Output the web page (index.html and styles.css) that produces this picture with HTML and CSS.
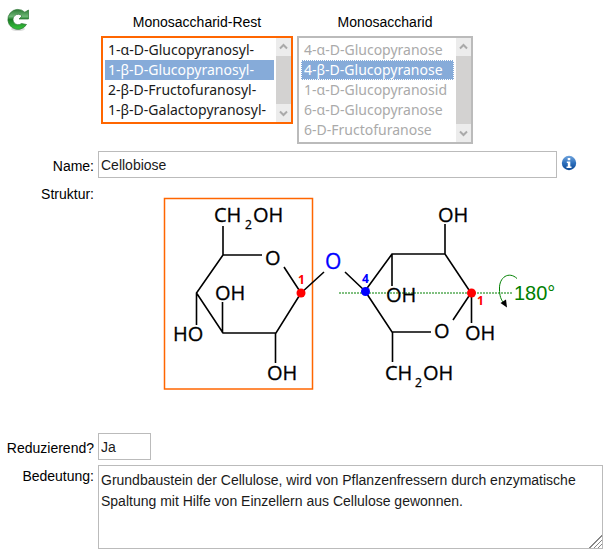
FILE: index.html
```html
<!DOCTYPE html>
<html lang="de">
<head>
<meta charset="utf-8">
<title>Disaccharide</title>
<link rel="stylesheet" href="styles.css">
</head>
<body>
<form class="sheet">
  <div class="side">
    <button class="reload" type="button" aria-label="Neu laden">
      <svg width="24" height="24" viewBox="0 0 24 24" aria-hidden="true">
        <defs>
          <linearGradient id="green" x1="0" y1="0" x2="0" y2="1">
            <stop offset="0" stop-color="#2c7a34"/>
            <stop offset=".35" stop-color="#6fb877"/>
            <stop offset=".5" stop-color="#1b7d25"/>
            <stop offset="1" stop-color="#35c63a"/>
          </linearGradient>
        </defs>
        <ellipse cx="12" cy="21" rx="7" ry="2" fill="#ddd"/>
        <path d="M22.500 2V11H13L16 8A5.200 5.200 0 1 0 15.500 15.500L20.500 16.500A10 10 0 1 1 18.800 4.200Z" fill="url(#green)" stroke="#2b7433" stroke-width=".7"/>
      </svg>
    </button>
  </div>
  <div class="pickers">
    <div class="picker">
      <label for="rest">Monosaccharid-Rest</label>
      <div class="listbox active">
        <select id="rest" size="4">
          <option>1-α-D-Glucopyranosyl-</option>
          <option selected>1-β-D-Glucopyranosyl-</option>
          <option>2-β-D-Fructofuranosyl-</option>
          <option>1-β-D-Galactopyranosyl-</option>
        </select>
        <div class="bar" aria-hidden="true">
          <svg class="arrow" viewBox="0 0 15 18"><path d="M4 10.500 7.500 7 11 10.500"/></svg>
          <svg class="arrow" viewBox="0 0 15 18"><path d="M4 7.500 7.500 11 11 7.500"/></svg>
        </div>
      </div>
    </div>
    <div class="picker">
      <label for="mono">Monosaccharid</label>
      <div class="listbox muted">
        <select id="mono" size="5">
          <option>4-α-D-Glucopyranose</option>
          <option selected>4-β-D-Glucopyranose</option>
          <option>1-α-D-Glucopyranosid</option>
          <option>6-α-D-Glucopyranose</option>
          <option>6-D-Fructofuranose</option>
        </select>
        <div class="bar" aria-hidden="true">
          <svg class="arrow" viewBox="0 0 15 18"><path d="M4 10.500 7.500 7 11 10.500"/></svg>
          <svg class="arrow" viewBox="0 0 15 18"><path d="M4 7.500 7.500 11 11 7.500"/></svg>
        </div>
      </div>
    </div>
  </div>

  <label class="caption" for="name">Name:</label>
  <div class="line">
    <input class="field name" id="name" type="text" value="Cellobiose">
    <button class="info" type="button" aria-label="Information">
      <svg width="16" height="16" viewBox="0 0 16 16" aria-hidden="true">
        <defs>
          <linearGradient id="blue" x1="0" y1="0" x2="0" y2="1">
            <stop offset="0" stop-color="#6fa3dc"/>
            <stop offset=".5" stop-color="#2f71bd"/>
            <stop offset="1" stop-color="#0b4794"/>
          </linearGradient>
        </defs>
        <circle cx="8" cy="8" r="7.200" fill="url(#blue)"/>
        <path d="M6.700 3h2.600v2.200H6.700zM5.800 6.500h3.500v5h1.200V13H5.500v-1.500h1.300V8h-1z" fill="#fff"/>
      </svg>
    </button>
  </div>

  <span class="caption top">Struktur:</span>
  <svg class="structure" width="480" height="250" viewBox="98 183 480 250" role="img" aria-label="Strukturformel der Cellobiose">
    <rect class="frame" x="164.500" y="198.500" width="148" height="190.500"/>
    <g class="bonds">
      <path d="M223 226V255H262M223 255 196.500 293 223 333H276L301 293 284 267M196.500 293V325M222.500 302V333M275.500 333V363"/>
      <path d="M301 293 324 272M345 272 365 291"/>
      <path d="M365 291 392 254H445L471 293 453 320M365 291 392 332H431M392 254V286M445 224V254M471.500 293V323M392.500 332V362"/>
    </g>
    <path class="axis" d="M339 293H512"/>
    <g class="atoms">
      <text x="214" y="222">CH</text><text class="sub" x="245" y="229">2</text><text x="253" y="222">OH</text>
      <text x="265" y="265">O</text>
      <text x="215" y="300">OH</text>
      <text x="173" y="341">HO</text>
      <text x="267" y="380">OH</text>
      <text class="bridge" x="325" y="269">O</text>
      <text x="438" y="222">OH</text>
      <text x="386" y="302">OH</text>
      <text x="434" y="338">O</text>
      <text x="465" y="340">OH</text>
      <text x="385" y="380">CH</text><text class="sub" x="415" y="387">2</text><text x="423" y="380">OH</text>
      <text class="turn" x="514" y="300">180°</text>
    </g>
    <circle class="red" cx="301" cy="293" r="4.500"/>
    <circle class="blue" cx="365.500" cy="291.500" r="4.500"/>
    <circle class="red" cx="471.500" cy="293" r="4.500"/>
    <text class="index red" x="298" y="284">1</text>
    <text class="index blue" x="362" y="283">4</text>
    <text class="index red" x="477" y="305">1</text>
    <path class="rotation" d="M517 278.500C509 271 499 277 499.500 289C499.500 296 501 300 504 303"/>
    <path d="M500.500 303 506 299.500 507 307.500Z"/>
  </svg>

  <label class="caption" for="reducing">Reduzierend?</label>
  <div class="line">
    <input class="field short" id="reducing" type="text" value="Ja">
  </div>

  <label class="caption top" for="meaning">Bedeutung:</label>
  <textarea class="field meaning" id="meaning" rows="4">Grundbaustein der Cellulose, wird von Pflanzenfressern durch enzymatische Spaltung mit Hilfe von Einzellern aus Cellulose gewonnen.</textarea>
</form>
</body>
</html>
```
FILE: styles.css
```css
* {
  box-sizing: border-box;
}

body {
  margin: 0;
  background: #fff;
  color: #000;
  font: 14px/20px "Liberation Sans", Arial, sans-serif;
}

.sheet {
  display: grid;
  grid-template-columns: 88px minmax(0, 1fr);
  column-gap: 4px;
  padding: 8px 9px 8px 6px;
}

.reload,
.info {
  display: block;
  padding: 0;
  border: 0;
  background: none;
}

.reload svg,
.info svg {
  display: block;
}

.pickers {
  display: flex;
  align-items: flex-start;
  gap: 4px;
  padding: 4px 0 7px 3px;
}

.picker {
  display: flex;
  flex-direction: column;
  gap: 4px;
}

.picker label {
  padding-top: 1px;
  line-height: 19px;
  text-align: center;
}

.listbox {
  display: flex;
  width: 176px;
  border: 2px solid #bbb;
}

.listbox.active {
  width: 192px;
  border-color: #f60;
}

.listbox select {
  flex: 1;
  min-width: 0;
  margin: 0;
  padding: 2px;
  border: 0;
  outline: 0;
  overflow: hidden;
  background: #fff;
  font: 14px/20px "Noto Sans", "Open Sans", sans-serif;
}

.listbox option {
  min-height: 20px;
  padding: 0 3px;
  color: #1a1a1a;
}

.listbox.muted option {
  color: #aaa;
}

.listbox option:checked {
  background: #86abd9 linear-gradient(#86abd9, #86abd9);
  -webkit-text-fill-color: #fff;
}

.muted option:checked {
  outline: 1px dotted #fff;
  outline-offset: -1px;
}

.bar {
  display: flex;
  flex-direction: column;
  justify-content: space-between;
  width: 15px;
  background: #d3d2d1;
}

.arrow {
  height: 18px;
  background: #ececec;
  fill: none;
  stroke: #aaa;
  stroke-width: 2;
}

.caption {
  padding-top: 5px;
  text-align: right;
}

.caption.top {
  padding-top: 1px;
}

.line {
  display: flex;
  gap: 4px;
  padding-bottom: 5px;
}

.info {
  align-self: flex-start;
  padding-top: 4px;
}

.field {
  margin: 0;
  padding: 2px;
  border: 1px solid #bbb;
  outline: 0;
  background: #fff;
  color: #1a1a1a;
  font: 14px/21px "Liberation Sans", Arial, sans-serif;
}

.name {
  flex: 0 1 459px;
  height: 27px;
  min-width: 0;
}

.short {
  width: 53px;
  height: 27px;
}

.meaning {
  display: block;
  width: 100%;
  height: 84px;
  padding: 4px 2px;
}

.meaning::-webkit-resizer {
  background:
    linear-gradient(135deg, #fff 50%, transparent 50%),
    repeating-linear-gradient(135deg, #888 0 1px, #fff 1px 3px);
}

.structure {
  display: block;
  max-width: 100%;
}

.frame {
  fill: none;
  stroke: #f60;
  stroke-width: 1.5;
}

.bonds {
  fill: none;
  stroke: #000;
  stroke-width: 1.6;
}

.atoms {
  font: 20px "Open Sans", "Noto Sans", sans-serif;
  stroke: #000;
  stroke-width: .3;
}

.atoms .sub {
  font-size: 12px;
}

.atoms .bridge {
  font-size: 21px;
  fill: #00f;
  stroke: #00f;
}

.atoms .turn {
  font: 20px "Liberation Sans", Arial, sans-serif;
  fill: #008000;
  stroke: none;
}

.axis,
.rotation {
  fill: none;
  stroke: #008000;
}

.axis {
  stroke-dasharray: 2 1;
}

.index {
  font: bold 12px "Open Sans", "Noto Sans", sans-serif;
}

.red {
  fill: #f00;
}

.blue {
  fill: #00f;
}
```
